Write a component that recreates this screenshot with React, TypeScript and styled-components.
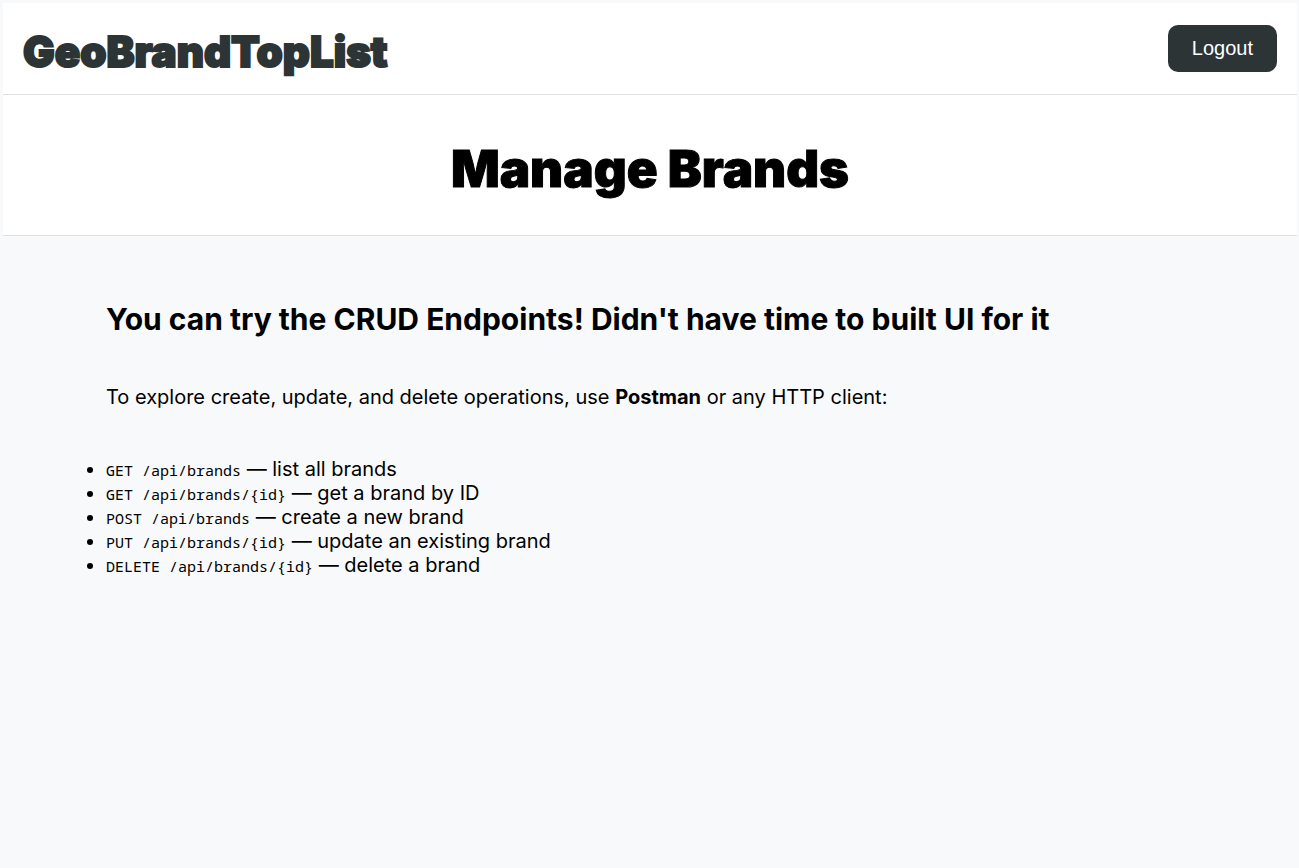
import React from "react";
import styled, { createGlobalStyle } from "styled-components";

const GlobalStyle = createGlobalStyle`
  * { box-sizing: border-box; }
  body {
    margin: 0;
    background: #f8f9fb;
    color: #000;
    font-family: Inter, "Liberation Sans", sans-serif;
    font-size: 20px;
    line-height: 24px;
  }
`;

const Page = styled.div`
  min-height: 100vh;
  padding: 3px 2px 0 3px;
`;

const TopBar = styled.header`
  display: flex;
  justify-content: space-between;
  align-items: center;
  padding: 15px 20px 16px;
  background: #fff;
  border-bottom: 1px solid #dedfe0;
`;

const Brand = styled.a`
  padding-top: 8px;
  color: #2d3436;
  font-size: 42px;
  line-height: 52px;
  font-weight: 900;
  -webkit-text-stroke: 2px currentColor;
  text-decoration: none;
`;

const LogoutButton = styled.button`
  padding: 12px 24px;
  border: 0;
  border-radius: 10px;
  background: #2d3436;
  color: #fff;
  font-family: "Liberation Sans", Arial, sans-serif;
  font-size: 20px;
  line-height: 23px;
  cursor: pointer;
`;

const TitleBand = styled.section`
  display: flex;
  justify-content: center;
  padding: 44px 20px 36px;
  background: #fff;
  border-bottom: 1px solid #dedfe0;
`;

const Title = styled.h1`
  margin: 0;
  font-size: 51px;
  line-height: 60px;
  font-weight: 900;
  -webkit-text-stroke: 1px currentColor;
`;

const Content = styled.main`
  max-width: 1128px;
  margin: 0 auto;
  padding: 65px 20px;
`;

const Heading = styled.h2`
  margin: 0 0 48px;
  font-size: 30px;
  line-height: 36px;
  font-weight: 700;
`;

const Intro = styled.p`
  margin: 0 0 48px;
`;

const EndpointList = styled.ul`
  margin: 0;
  padding: 0;
`;

const Path = styled.code`
  font-family: "Noto Sans Mono", "DejaVu Sans Mono", monospace;
  font-size: 15px;
  line-height: 15px;
`;

const endpoints = [
  { path: "GET /api/brands", text: "list all brands" },
  { path: "GET /api/brands/{id}", text: "get a brand by ID" },
  { path: "POST /api/brands", text: "create a new brand" },
  { path: "PUT /api/brands/{id}", text: "update an existing brand" },
  { path: "DELETE /api/brands/{id}", text: "delete a brand" },
];

export default function App() {
  return (
    <Page>
      <GlobalStyle />
      <TopBar>
        <Brand href="#">GeoBrandTopList</Brand>
        <LogoutButton type="button">Logout</LogoutButton>
      </TopBar>
      <TitleBand>
        <Title>Manage Brands</Title>
      </TitleBand>
      <Content>
        <Heading>You can try the CRUD Endpoints! Didn't have time to built UI for it</Heading>
        <Intro>
          To explore create, update, and delete operations, use <strong>Postman</strong> or any HTTP client:
        </Intro>
        <EndpointList>
          {endpoints.map(({ path, text }) => (
            <li key={path}>
              <Path>{path}</Path> — {text}
            </li>
          ))}
        </EndpointList>
      </Content>
    </Page>
  );
}
